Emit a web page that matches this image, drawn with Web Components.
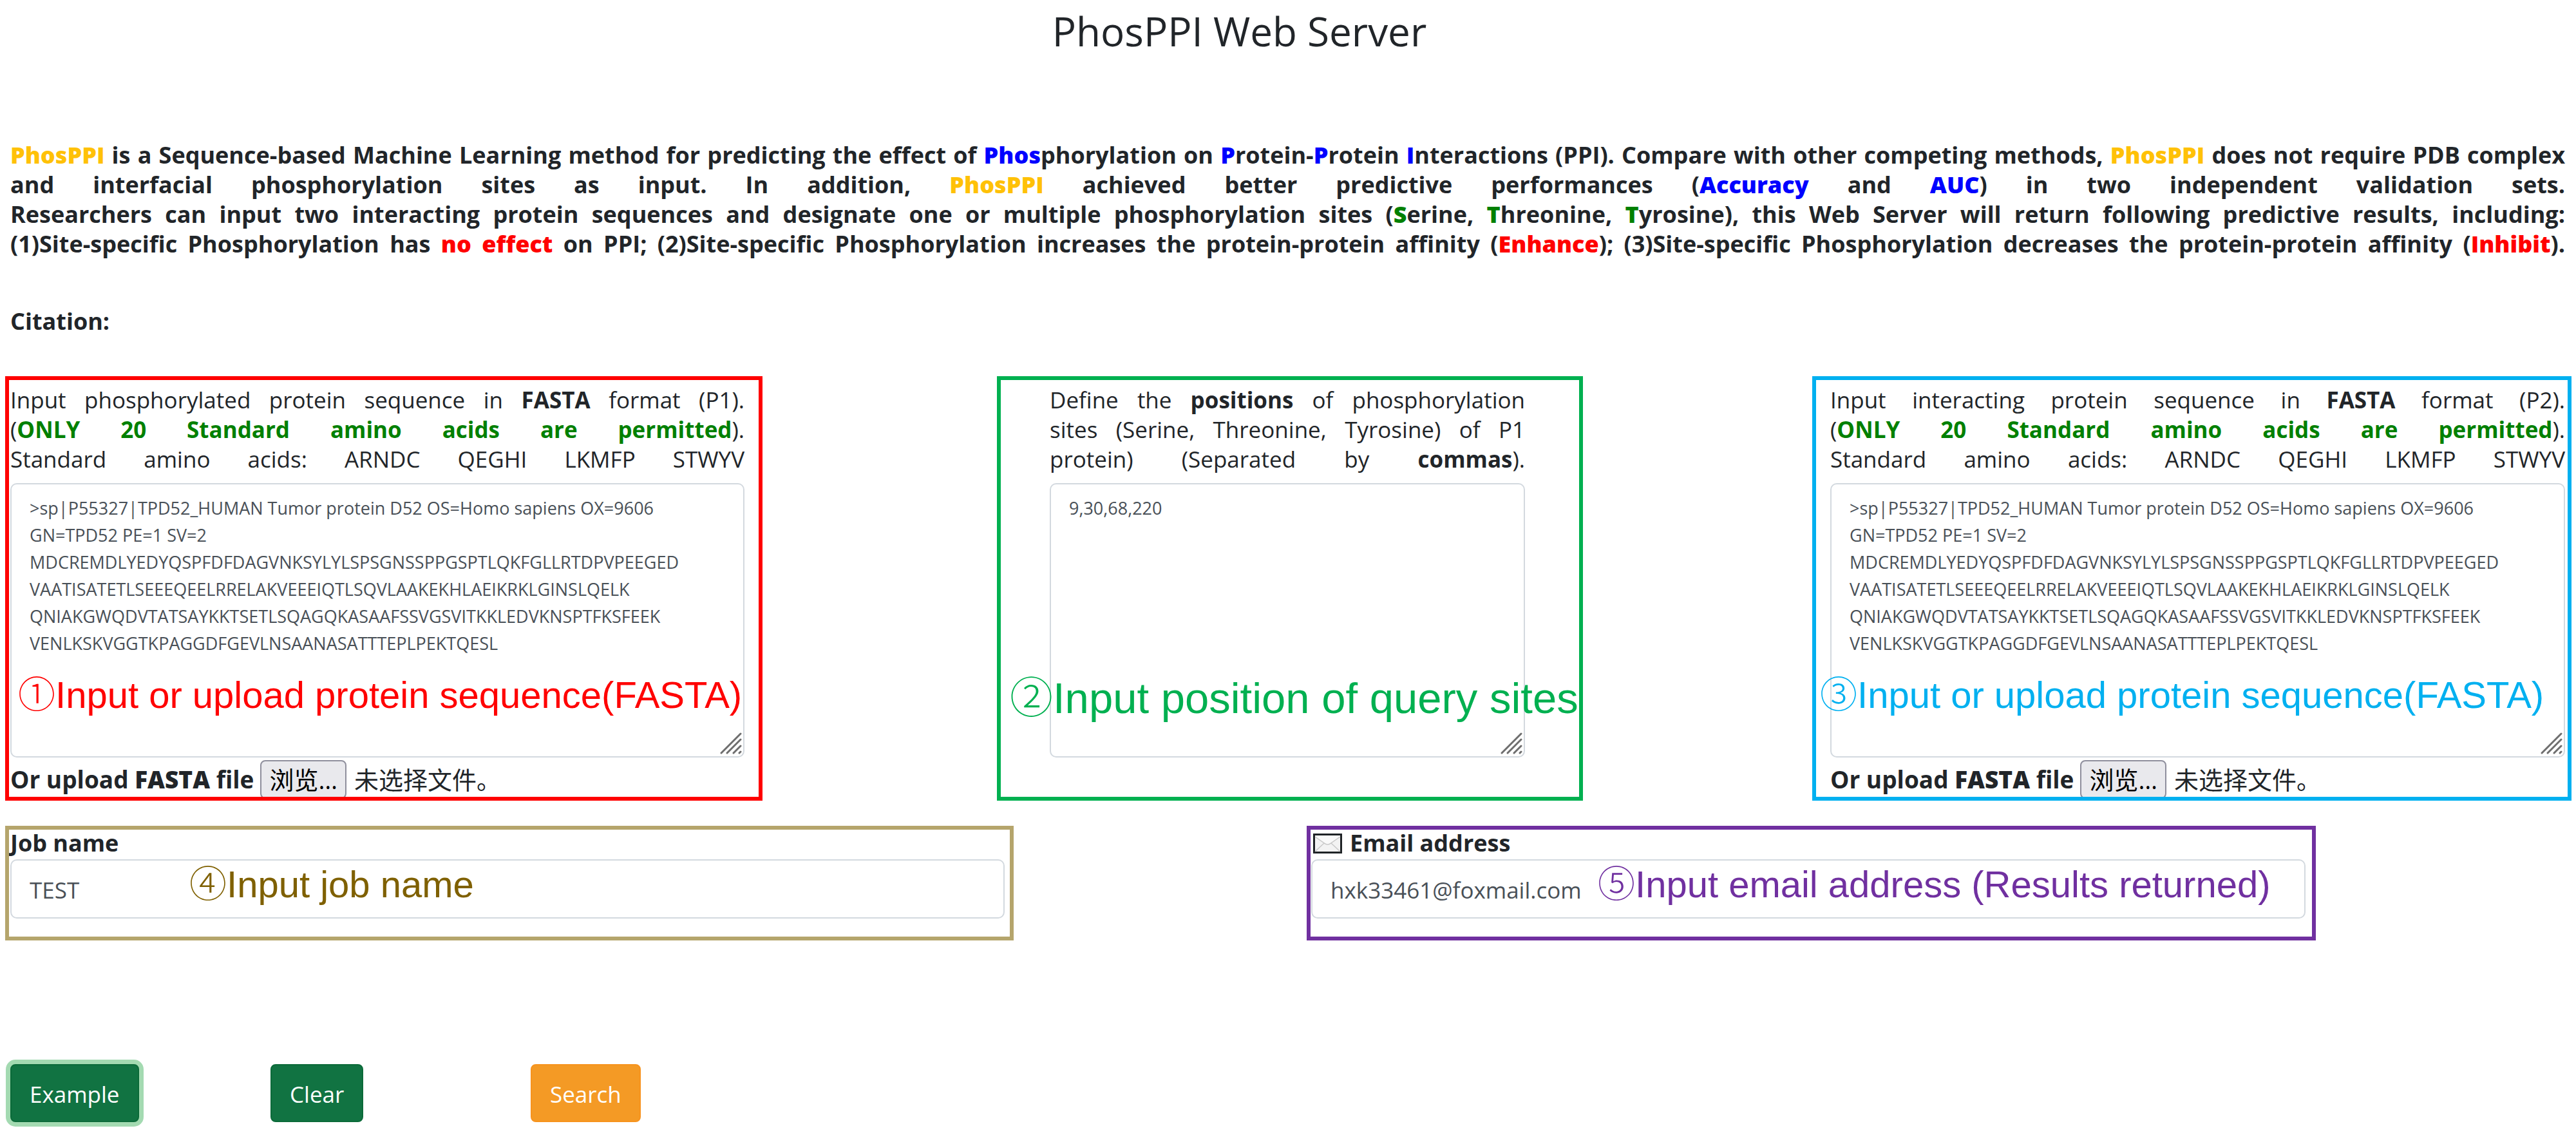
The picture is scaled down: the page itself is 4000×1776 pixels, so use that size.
<!DOCTYPE html>
<html lang="en">
<head>
<meta charset="utf-8">
<title>PhosPPI Web Server</title>
<style>
  body {
    margin: 0;
    background: #fff;
    color: #212529;
    font-family: "Open Sans", "Noto Sans CJK SC", sans-serif;
    font-size: 35px;
    line-height: 46px;
  }
  b { font-weight: 700; }
  .green { color: #008000; }
</style>
</head>
<body>
<phos-page>
  <phos-intro slot="intro"></phos-intro>

  <phos-panel slot="p1" style="--c:#ff0000; --pad-left:2px; --pad-right:22px; --note-left:14px; --note-top:452px; --note-size:58px" num="①" note="Input or upload protein sequence(FASTA)">
    <sequence-field upload>
      <span slot="line">Input phosphorylated protein sequence in <b>FASTA</b> format (P1).</span>
      <span slot="line">(<b class="green">ONLY 20 Standard amino acids are permitted</b>).</span>
      <span slot="line">Standard amino acids: ARNDC QEGHI LKMFP STWYV</span>
    </sequence-field>
  </phos-panel>

  <phos-panel slot="p2" style="--c:#00b050; --pad-left:76px; --pad-right:84px; --note-left:14px; --note-top:456px; --note-size:67px" num="②" note="Input position of query sites">
    <sequence-field value="9,30,68,220">
      <span slot="line">Define the <b>positions</b> of phosphorylation</span>
      <span slot="line">sites (Serine, Threonine, Tyrosine) of P1</span>
      <span slot="line">protein) (Separated by <b>commas</b>).</span>
    </sequence-field>
  </phos-panel>

  <phos-panel slot="p3" style="--c:#00b0f0; --pad-left:22px; --pad-right:4px; --note-left:6px; --note-top:452px; --note-size:58px" num="③" note="Input or upload protein sequence(FASTA)">
    <sequence-field upload>
      <span slot="line">Input interacting protein sequence in <b>FASTA</b> format (P2).</span>
      <span slot="line">(<b class="green">ONLY 20 Standard amino acids are permitted</b>).</span>
      <span slot="line">Standard amino acids: ARNDC QEGHI LKMFP STWYV</span>
    </sequence-field>
  </phos-panel>

  <phos-panel slot="job" style="--c:#b5a56c; --note-c:#7f6000; --pad-top:0px; --pad-left:2px; --pad-right:8px; --note-left:280px; --note-top:48px; --note-size:58px" num="④" note="Input job name">
    <line-field label="Job name" type="text" value="TEST"></line-field>
  </phos-panel>

  <phos-panel slot="email" style="--c:#7030a0; --pad-top:0px; --pad-left:1px; --pad-right:10px; --note-left:446px; --note-top:48px; --note-size:58px" num="⑤" note="Input email address (Results returned)">
    <line-field label="Email address" type="email" value="hxk33461@foxmail.com" icon></line-field>
  </phos-panel>

  <phos-button slot="action" class="active">Example</phos-button>
  <phos-button slot="action">Clear</phos-button>
  <phos-button slot="action" variant="search">Search</phos-button>
</phos-page>

<script>
const FASTA = `>sp|P55327|TPD52_HUMAN Tumor protein D52 OS=Homo sapiens OX=9606 GN=TPD52 PE=1 SV=2
MDCREMDLYEDYQSPFDFDAGVNKSYLYLSPSGNSSPPGSPTLQKFGLLRTDPVPEEGED
VAATISATETLSEEEQEELRRELAKVEEEIQTLSQVLAAKEKHLAEIKRKLGINSLQELK
QNIAKGWQDVTATSAYKKTSETLSQAGQKASAAFSSVGSVITKKLEDVKNSPTFKSFEEK
VENLKSKVGGTKPAGGDFGEVLNSAANASATTTEPLPEKTQESL`;

/* Page frame: title, introduction, two rows of panels, action row. */
customElements.define('phos-page', class extends HTMLElement {
  constructor() {
    super();
    this.attachShadow({ mode: 'open' }).innerHTML = `
      <style>
        :host { display: block; }
        main { display: flex; flex-direction: column; padding: 11px 7px 27px 8px; }
        h1 { margin: 0 0 133px; padding-right: 152px; font-size: 62px; line-height: 74px; font-weight: 400; text-align: center; }
        .row { display: grid; }
        .sequences { grid-template-columns: 1176fr 364fr 910fr 356fr 1179fr; margin-top: 62px; }
        .details { grid-template-columns: 1566fr 455fr 1567fr 397fr; margin-top: 39px; }
        .actions { grid-template-columns: 404fr 404fr 404fr 2765fr; margin-top: 192px; padding-left: 8px; justify-items: start; }
        .c3 { grid-column: 3; } .c5 { grid-column: 5; }
        .cell { display: grid; min-width: 0; }
      </style>
      <main>
        <h1>PhosPPI Web Server</h1>
        <slot name="intro"></slot>
        <div class="row sequences">
          <div class="cell"><slot name="p1"></slot></div>
          <div class="cell c3"><slot name="p2"></slot></div>
          <div class="cell c5"><slot name="p3"></slot></div>
        </div>
        <div class="row details">
          <div class="cell"><slot name="job"></slot></div>
          <div class="cell c3"><slot name="email"></slot></div>
        </div>
        <div class="row actions"><slot name="action"></slot></div>
      </main>`;
  }
});

/* Justified introduction with highlighted terms. */
customElements.define('phos-intro', class extends HTMLElement {
  constructor() {
    super();
    this.attachShadow({ mode: 'open' }).innerHTML = `
      <style>
        :host { display: block; padding: 0 10px 0 8px; font-size: 36px; font-weight: 700; }
        p { margin: 0; text-align: justify; text-align-last: justify; }
        .cite { margin-top: 74px; text-align-last: left; }
        b { font-weight: 800; }
        .y { color: #ffc107; } .b { color: #0000ff; } .g { color: #008000; } .r { color: #ff0000; }
      </style>
      <p><b class="y">PhosPPI</b> is a Sequence-based Machine Learning method for predicting the effect of <b class="b">Phos</b>phorylation on <b class="b">P</b>rotein-<b class="b">P</b>rotein <b class="b">I</b>nteractions (PPI). Compare with other competing methods, <b class="y">PhosPPI</b> does not require PDB complex and interfacial phosphorylation sites as input. In addition, <b class="y">PhosPPI</b> achieved better predictive performances (<b class="b">Accuracy</b> and <b class="b">AUC</b>) in two independent validation sets.</p>
      <p>Researchers can input two interacting protein sequences and designate one or multiple phosphorylation sites (<b class="g">S</b>erine, <b class="g">T</b>hreonine, <b class="g">T</b>yrosine), this Web Server will return following predictive results, including:</p>
      <p>(1)Site-specific Phosphorylation has <b class="r">no effect</b> on PPI; (2)Site-specific Phosphorylation increases the protein-protein affinity (<b class="r">Enhance</b>); (3)Site-specific Phosphorylation decreases the protein-protein affinity (<b class="r">Inhibit</b>).</p>
      <p class="cite">Citation:</p>`;
  }
});

/* Outlined step with a numbered note lying over its content. */
customElements.define('phos-panel', class extends HTMLElement {
  constructor() {
    super();
    this.attachShadow({ mode: 'open' }).innerHTML = `
      <style>
        :host {
          display: block; position: relative; overflow: hidden; box-sizing: border-box;
          border: 6px solid var(--c);
          padding: var(--pad-top, 8px) var(--pad-right) 0 var(--pad-left);
        }
        .note {
          position: absolute; left: var(--note-left); top: var(--note-top);
          color: var(--note-c, var(--c)); font-family: "Liberation Sans", sans-serif;
          font-size: var(--note-size); line-height: 64px; white-space: nowrap; pointer-events: none;
        }
        .num { font-family: "Noto Sans CJK SC", sans-serif; font-weight: 300; }
      </style>
      <slot></slot>
      <div class="note"><span class="num"></span><span class="text"></span></div>`;
  }
  connectedCallback() {
    this.shadowRoot.querySelector('.num').textContent = this.getAttribute('num');
    this.shadowRoot.querySelector('.text').textContent = this.getAttribute('note');
  }
});

/* Labelled text area with an optional file picker under it. */
customElements.define('sequence-field', class extends HTMLElement {
  constructor() {
    super();
    this.attachShadow({ mode: 'open' }).innerHTML = `
      <style>
        :host { display: block; }
        .label { display: block; }
        ::slotted(span) { display: block; white-space: nowrap; text-align: justify; text-align-last: justify; }
        .box { position: relative; margin-top: 14px; }
        textarea {
          display: block; box-sizing: border-box; width: 100%; height: 426px; margin: 0;
          padding: 16px 28px; border: 2px solid #d3d9df; border-radius: 10px; background: #fff;
          color: #495057; font-family: inherit; font-size: 27px; line-height: 42px;
          resize: none; outline: none; overflow: hidden;
        }
        svg { position: absolute; right: 4px; bottom: 4px; width: 34px; height: 35px; pointer-events: none; }
        .upload { display: flex; align-items: center; gap: 10px; margin: 4px 0 -3px; }
        .upload label { font-size: 37px; font-weight: 700; }
        .upload b { font-weight: 800; }
        input[type=file] { display: none; }
        button {
          box-sizing: border-box; height: 60px; padding: 0 12px; border: 2px solid #8f8f9d; border-radius: 8px;
          background: #e9e9ed; color: #000; font-family: inherit; font-size: 38px; line-height: 52px;
        }
        .status { font-size: 38px; padding-left: 2px; }
      </style>
      <label class="label" for="text"><slot name="line"></slot></label>
      <div class="box">
        <textarea id="text" spellcheck="false"></textarea>
        <svg viewBox="0 0 34 35" fill="none" stroke="#6e6e6e" stroke-width="3" stroke-linecap="round">
          <path d="M2 32 32 2M11 32 32 11M21 32 32 21M30 32 32 30"/>
        </svg>
      </div>`;
  }
  connectedCallback() {
    const root = this.shadowRoot;
    root.querySelector('textarea').value = this.getAttribute('value') || FASTA;
    if (this.hasAttribute('upload')) {
      const row = document.createElement('div');
      row.className = 'upload';
      row.innerHTML = `<label for="file">Or upload <b>FASTA</b> file</label>
        <input type="file" id="file"><button type="button">浏览…</button><span class="status">未选择文件。</span>`;
      root.append(row);
      row.querySelector('button').addEventListener('click', () => row.querySelector('input').click());
    }
  }
});

/* Single-line field with a label above it. */
customElements.define('line-field', class extends HTMLElement {
  constructor() {
    super();
    this.attachShadow({ mode: 'open' }).innerHTML = `
      <style>
        :host { display: block; padding-bottom: 28px; }
        label { display: flex; align-items: center; gap: 12px; margin-bottom: 4px; font-size: 36px; line-height: 42px; font-weight: 700; }
        svg { width: 45px; height: 31px; margin-left: 3px; }
        input {
          display: block; box-sizing: border-box; width: 100%; height: 92px; margin: 0; padding: 2px 28px 0;
          border: 2px solid #d3d9df; border-radius: 10px; background: #fff;
          color: #495057; font-family: inherit; font-size: 35px; outline: none;
        }
      </style>
      <label for="field"><span></span></label>
      <input id="field">`;
  }
  connectedCallback() {
    const root = this.shadowRoot;
    const label = root.querySelector('label');
    label.querySelector('span').textContent = this.getAttribute('label');
    if (this.hasAttribute('icon')) {
      label.insertAdjacentHTML('afterbegin', `<svg viewBox="0 0 45 31" fill="none">
        <rect x="1.500" y="1.500" width="42" height="28" fill="#f3f3f3" stroke="#1f2326" stroke-width="3"/>
        <path d="M3 3H42V5L26 16Q22.500 18 19 16L3 5Z" fill="#fafafa"/>
        <path d="M3 5 19 16Q22.500 18 26 16L42 5M3 28 17 15M42 28 28 15" stroke="#c9c9c9" stroke-width="1.500"/>
      </svg>`);
    }
    const input = root.querySelector('input');
    input.type = this.getAttribute('type');
    input.value = this.getAttribute('value');
  }
});

/* Action button; "active" carries the focus ring. */
customElements.define('phos-button', class extends HTMLElement {
  constructor() {
    super();
    this.attachShadow({ mode: 'open' }).innerHTML = `
      <style>
        :host { display: block; }
        button {
          display: block; box-sizing: border-box; height: 90px; margin: 0; padding: 4px 28px 0;
          border: 2px solid #0b6a39; border-radius: 8px; background: #117342; color: #fff;
          font-family: inherit; font-size: 35px; line-height: 46px;
        }
        :host([variant=search]) button { background: #f49a25; border-color: #f7931e; }
        :host(.active) button { box-shadow: 0 0 0 7px #a3dab1; }
      </style>
      <button type="button"><slot></slot></button>`;
  }
});
</script>
</body>
</html>
